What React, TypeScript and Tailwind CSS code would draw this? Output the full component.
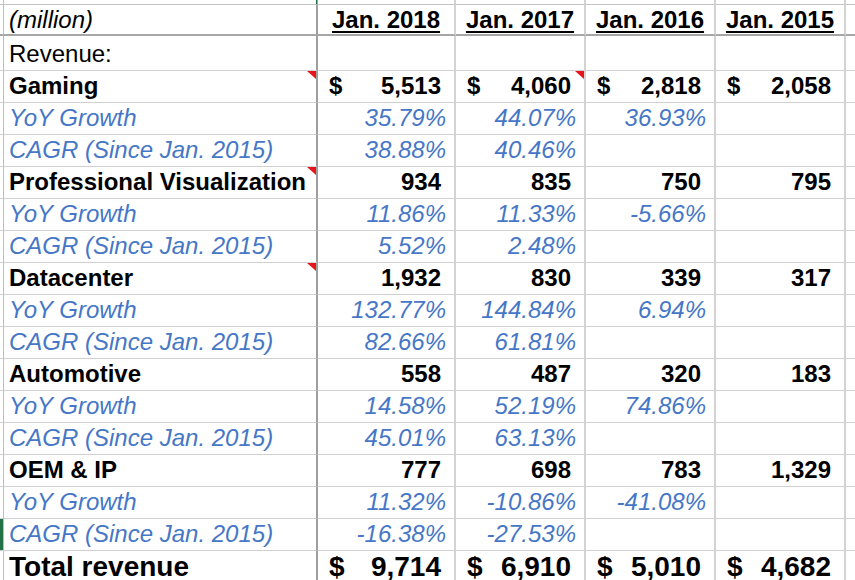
import React from "react";

type Kind = "plain" | "bold" | "growth" | "total";

interface Row {
  label: string;
  kind: Kind;
  vals?: string[];
  flags?: number[];
}

const ROWS: Row[] = [
  { label: "Gaming", kind: "bold", vals: ["$5,513", "$4,060", "$2,818", "$2,058"], flags: [0, 2] },
  { label: "YoY Growth", kind: "growth", vals: ["35.79%", "44.07%", "36.93%", ""] },
  { label: "CAGR (Since Jan. 2015)", kind: "growth", vals: ["38.88%", "40.46%", "", ""] },
  { label: "Professional Visualization", kind: "bold", vals: ["934", "835", "750", "795"], flags: [0] },
  { label: "YoY Growth", kind: "growth", vals: ["11.86%", "11.33%", "-5.66%", ""] },
  { label: "CAGR (Since Jan. 2015)", kind: "growth", vals: ["5.52%", "2.48%", "", ""] },
  { label: "Datacenter", kind: "bold", vals: ["1,932", "830", "339", "317"], flags: [0] },
  { label: "YoY Growth", kind: "growth", vals: ["132.77%", "144.84%", "6.94%", ""] },
  { label: "CAGR (Since Jan. 2015)", kind: "growth", vals: ["82.66%", "61.81%", "", ""] },
  { label: "Automotive", kind: "bold", vals: ["558", "487", "320", "183"] },
  { label: "YoY Growth", kind: "growth", vals: ["14.58%", "52.19%", "74.86%", ""] },
  { label: "CAGR (Since Jan. 2015)", kind: "growth", vals: ["45.01%", "63.13%", "", ""] },
  { label: "OEM & IP", kind: "bold", vals: ["777", "698", "783", "1,329"] },
  { label: "YoY Growth", kind: "growth", vals: ["11.32%", "-10.86%", "-41.08%", ""] },
  { label: "CAGR (Since Jan. 2015)", kind: "growth", vals: ["-16.38%", "-27.53%", "", ""] },
];

const YEARS = ["Jan. 2018", "Jan. 2017", "Jan. 2016", "Jan. 2015"];

const gridCols = "grid grid-cols-[4px_314px_138px_130px_130px_130px_1fr]";

function Flag() {
  return (
    <svg className="absolute top-0 right-0" width="9" height="8" viewBox="0 0 9 8">
      <polygon points="0,0 9,0 9,8" fill="#e8141b" />
    </svg>
  );
}

function ValueCell({ value, kind, flag }: { value: string; kind: Kind; flag: boolean }) {
  const base = "relative flex items-end border-r-2 border-r-[#d3d3d3] border-b border-b-[#d0d0d0]";
  if (kind === "growth") {
    return (
      <div className={`${base} justify-end pr-[8px] pb-[2px] italic text-[#4677c6]`}>
        {value}
      </div>
    );
  }
  const size = kind === "total" ? "text-[28px] pb-[3px]" : "pb-[2px]";
  if (value.startsWith("$")) {
    return (
      <div className={`${base} justify-between pl-[11px] pr-[13px] font-bold ${size}`}>
        <span>$</span>
        <span>{value.slice(1)}</span>
        {flag && <Flag />}
      </div>
    );
  }
  return (
    <div className={`${base} justify-end pr-[13px] font-bold ${size}`}>
      {value}
      {flag && <Flag />}
    </div>
  );
}

function DataRow({ row, selected }: { row: Row; selected?: boolean }) {
  const height = row.kind === "total" ? "h-[36px]" : "h-[32px]";
  const label =
    row.kind === "bold"
      ? "font-bold pb-[2px]"
      : row.kind === "growth"
        ? "italic text-[#4677c6] pb-[2px]"
        : row.kind === "total"
          ? "font-bold text-[28px] pb-[3px]"
          : "pb-[2px]";
  return (
    <div className={`${gridCols} ${height}`}>
      <div
        className={`border-r border-r-[#bdbdbd] border-b border-b-[#d0d0d0] ${selected ? "bg-[#217346]" : ""}`}
      />
      <div
        className={`relative flex items-end pl-[5px] border-r-2 border-r-[#9e9e9e] border-b border-b-[#d0d0d0] ${label}`}
      >
        {row.label}
        {row.flags?.includes(0) && <Flag />}
      </div>
      {(row.vals ?? ["", "", "", ""]).map((v, i) => (
        <ValueCell key={i} value={v} kind={row.kind} flag={!!row.flags?.includes(i + 1)} />
      ))}
      <div className="border-b border-b-[#d0d0d0]" />
    </div>
  );
}

export default function App() {
  return (
    <div className="w-[855px] h-[580px] overflow-hidden bg-white text-black text-[24px] leading-[1.15] font-['Liberation_Sans',Arial,sans-serif]">
      {/* row above, mostly cut off */}
      <div className={`${gridCols} h-[5px]`}>
        <div className="border-r border-r-[#bdbdbd] border-b border-b-[#c4c4c4]" />
        <div className="relative border-r-2 border-r-[#9e9e9e] border-b border-b-[#c4c4c4]">
          <div className="absolute top-0 -right-[1px] w-px h-[4px] bg-[#217346]" />
        </div>
        <div className="border-r-2 border-r-[#d3d3d3] border-b border-b-[#c4c4c4]" />
        <div className="border-r-2 border-r-[#d3d3d3] border-b border-b-[#c4c4c4]" />
        <div className="border-r-2 border-r-[#d3d3d3] border-b border-b-[#c4c4c4]" />
        <div className="border-r-2 border-r-[#d3d3d3] border-b border-b-[#c4c4c4]" />
        <div className="border-b border-b-[#c4c4c4]" />
      </div>

      {/* header */}
      <div className={`${gridCols} h-[31px]`}>
        <div className="border-r border-r-[#bdbdbd] border-b-2 border-b-[#a6a6a6]" />
        <div className="flex items-end pl-[5px] italic border-r-2 border-r-[#9e9e9e] border-b-2 border-b-[#a6a6a6]">
          (million)
        </div>
        {YEARS.map((y) => (
          <div
            key={y}
            className="flex items-end justify-center font-bold underline underline-offset-[3px] decoration-2 border-r-2 border-r-[#d3d3d3] border-b-2 border-b-[#a6a6a6]"
          >
            {y}
          </div>
        ))}
        <div className="border-b-2 border-b-[#a6a6a6]" />
      </div>

      {/* Revenue: */}
      <div className={`${gridCols} h-[35px]`}>
        <div className="border-r border-r-[#bdbdbd] border-b border-b-[#d0d0d0]" />
        <div className="flex items-end pl-[5px] pb-[2px] border-r-2 border-r-[#9e9e9e] border-b border-b-[#d0d0d0]">
          Revenue:
        </div>
        <div className="border-r-2 border-r-[#d3d3d3] border-b border-b-[#d0d0d0]" />
        <div className="border-r-2 border-r-[#d3d3d3] border-b border-b-[#d0d0d0]" />
        <div className="border-r-2 border-r-[#d3d3d3] border-b border-b-[#d0d0d0]" />
        <div className="border-r-2 border-r-[#d3d3d3] border-b border-b-[#d0d0d0]" />
        <div className="border-b border-b-[#d0d0d0]" />
      </div>

      {ROWS.map((r, i) => (
        <DataRow key={i} row={r} selected={i === ROWS.length - 1} />
      ))}

      <DataRow
        row={{ label: "Total revenue", kind: "total", vals: ["$9,714", "$6,910", "$5,010", "$4,682"] }}
      />
    </div>
  );
}
